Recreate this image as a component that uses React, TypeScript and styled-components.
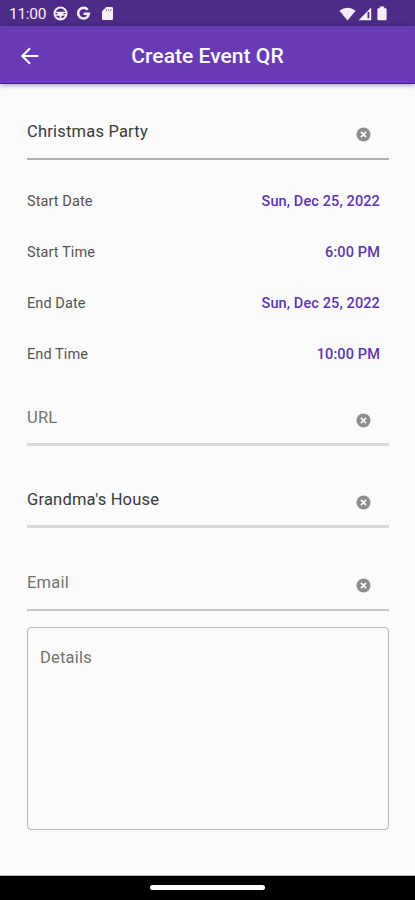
import React from "react";
import styled, { createGlobalStyle } from "styled-components";

const GlobalStyle = createGlobalStyle`
  * { box-sizing: border-box; }
  body { margin: 0; background: #fbfbfb; font-family: Roboto, sans-serif; }
`;

const Screen = styled.div`
  width: 415px;
  height: 900px;
  display: flex;
  flex-direction: column;
  background: #fbfbfb;
  overflow: hidden;
`;

const StatusBar = styled.div`
  height: 26px;
  flex: none;
  display: flex;
  align-items: center;
  justify-content: space-between;
  padding: 1px 24px 0 9px;
  background: #4e2b87;
  color: #f4effb;
`;

const StatusGroup = styled.div<{ $gap: number }>`
  display: flex;
  align-items: center;
  gap: ${(p) => p.$gap}px;
  svg { display: block; }
`;

const Clock = styled.span`
  width: 37px;
  font-size: 15.5px;
  line-height: 20px;
  letter-spacing: -0.3px;
  white-space: nowrap;
  margin-right: -2px;
`;

const AppBar = styled.header`
  height: 58px;
  flex: none;
  display: grid;
  grid-template-columns: 60px 1fr 60px;
  align-items: center;
  background: #693ab6;
  border-bottom: 1px solid #5215a8;
  box-shadow: 0 1px 5px rgba(0, 0, 0, 0.4);
`;

const BackButton = styled.button`
  width: 60px;
  height: 56px;
  padding: 2px 0 0;
  border: 0;
  background: none;
  display: grid;
  place-items: center;
`;

const Title = styled.h1`
  margin: 3px 0 0;
  text-align: center;
  color: #fcfaff;
  font-size: 21.1px;
  line-height: 26px;
  font-weight: 500;
  white-space: nowrap;
`;

const Form = styled.main`
  flex: 1;
  display: flex;
  flex-direction: column;
  padding: 12px 26px 0 27px;
`;

const Field = styled.div<{ $line: number; $color: string; $top: number }>`
  height: 64px;
  flex: none;
  margin-top: ${(p) => p.$top}px;
  display: flex;
  justify-content: space-between;
  padding: 25px 18px 0 0;
  border-bottom: ${(p) => p.$line}px solid ${(p) => p.$color};
`;

const FieldText = styled.span<{ $hint?: boolean }>`
  font-size: 16.5px;
  line-height: 21px;
  letter-spacing: 0.2px;
  color: ${(p) => (p.$hint ? "#727272" : "#3a3a3a")};
`;

const ClearButton = styled.button`
  align-self: flex-start;
  margin: 6px 0 0;
  padding: 0;
  width: 15px;
  height: 15px;
  border: 0;
  background: none;
  svg { display: block; }
`;

const Schedule = styled.div`
  display: grid;
  grid-template-rows: repeat(4, 50.7px);
  padding: 0 9px 0 0;
  margin-top: 16.6px;
`;

const ScheduleRow = styled.div`
  display: flex;
  align-items: center;
  justify-content: space-between;
  font-size: 14.5px;
`;

const Label = styled.span`
  color: #555;
  letter-spacing: 0.08px;
`;

const Value = styled.span`
  color: #5d36b2;
  font-weight: 500;
  letter-spacing: 0.12px;
`;

const Details = styled.div`
  height: 203px;
  flex: none;
  margin-top: 16px;
  padding: 19px 12px;
  border: 1.5px solid #b9b9b9;
  border-radius: 4px;
  color: #727272;
  font-size: 16.5px;
  line-height: 21px;
  letter-spacing: 0.2px;
`;

const NavBar = styled.footer`
  height: 24px;
  flex: none;
  display: flex;
  justify-content: center;
  padding-top: 9px;
  background: #000;
  box-shadow: 0 -1px 0 #bbb;
`;

const NavPill = styled.div`
  width: 115px;
  height: 5px;
  border-radius: 3px;
  background: #fff;
`;

const ClearIcon = () => (
  <svg width="15" height="15" viewBox="0 0 15 15">
    <circle cx="7.5" cy="7.5" r="7" fill="#8e8e8e" />
    <path d="M4.9 4.9l5.2 5.2M10.1 4.9l-5.2 5.2" stroke="#fafafa" strokeWidth="1.7" />
  </svg>
);

type InputProps = {
  text: string;
  hint?: boolean;
  line?: number;
  color?: string;
  top?: number;
};

const Input = ({ text, hint, line = 2, color = "#c6c6c6", top = 0 }: InputProps) => (
  <Field $line={line} $color={color} $top={top}>
    <FieldText $hint={hint}>{text}</FieldText>
    <ClearButton aria-label="Clear"><ClearIcon /></ClearButton>
  </Field>
);

const schedule = [
  ["Start Date", "Sun, Dec 25, 2022"],
  ["Start Time", "6:00 PM"],
  ["End Date", "Sun, Dec 25, 2022"],
  ["End Time", "10:00 PM"],
];

export default function App() {
  return (
    <Screen>
      <GlobalStyle />
      <StatusBar>
        <StatusGroup $gap={8.5}>
          <Clock>11:00</Clock>
          <svg width="15" height="15" viewBox="0 0 15 15" fill="none" stroke="currentColor">
            <circle cx="7.5" cy="7.5" r="6" strokeWidth="2" />
            <path d="M2 6.3h11M2 9h11" strokeWidth="1.3" />
            <path d="M5 6.5h5v2.2H5z" fill="currentColor" />
            <path d="M7.5 8.5V13" strokeWidth="2" />
          </svg>
          <svg width="15" height="15" viewBox="0 0 15 15" fill="none" stroke="currentColor" strokeWidth="2.5">
            <path d="M11.7 3.7A5.4 5.4 0 1 0 12.9 7.7H7.6" />
          </svg>
          <svg width="15" height="15" viewBox="0 0 15 15">
            <path d="M6.3 1h5.4q1.3 0 1.3 1.3v10.4q0 1.3-1.3 1.3H3.3Q2 14 2 12.7V5.3z" fill="currentColor" />
            <path d="M6.5 3v2.3M8.7 3v2.3M10.9 3v2.3" stroke="#9d85bd" strokeWidth="1" />
          </svg>
        </StatusGroup>
        <StatusGroup $gap={1.5}>
          <svg width="17" height="14" viewBox="0 0 17 14">
            <path d="M.4 3.7Q8.5-2.3 16.6 3.7L8.5 13.5z" fill="currentColor" />
          </svg>
          <svg width="14" height="14" viewBox="0 0 14 14">
            <path d="M.5 13.3L13.2.6v12.7z" fill="currentColor" />
            <path d="M10.4 5v6.4" stroke="#4e2b87" strokeWidth="1.8" />
          </svg>
          <svg width="18" height="15" viewBox="-1 0 18 15">
            <path d="M5.8 2.2V.5h4.4v1.7h1.4q1 0 1 1v10q0 1-1 1H4.4q-1 0-1-1v-10q0-1 1-1z" fill="currentColor" />
          </svg>
        </StatusGroup>
      </StatusBar>
      <AppBar>
        <BackButton aria-label="Back">
          <svg width="20" height="18" viewBox="0 0 20 18" fill="none" stroke="#fff" strokeWidth="2">
            <path d="M18.3 9H3M10 1.3L2.3 9l7.7 7.7" />
          </svg>
        </BackButton>
        <Title>Create Event QR</Title>
      </AppBar>
      <Form>
        <Input text="Christmas Party" color="#b0b0b0" />
        <Schedule>
          {schedule.map(([label, value]) => (
            <ScheduleRow key={label}>
              <Label>{label}</Label>
              <Value>{value}</Value>
            </ScheduleRow>
          ))}
        </Schedule>
        <Input text="URL" hint line={3} color="#d9d9d9" top={2.6} />
        <Input text="Grandma's House" line={3} color="#d9d9d9" top={18} />
        <Input text="Email" hint top={19} />
        <Details>Details</Details>
      </Form>
      <NavBar><NavPill /></NavBar>
    </Screen>
  );
}
